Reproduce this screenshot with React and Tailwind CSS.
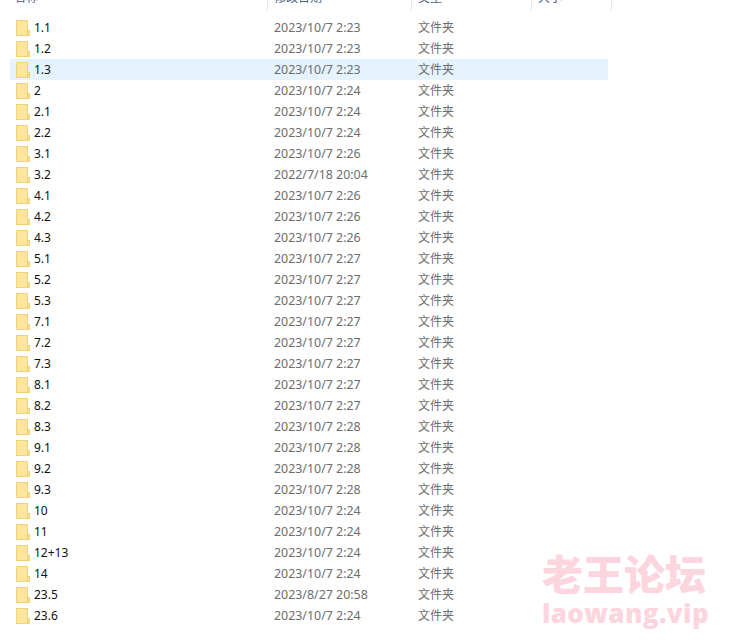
const rows = [
  ["1.1", "2023/10/7 2:23"], ["1.2", "2023/10/7 2:23"], ["1.3", "2023/10/7 2:23", true], ["2", "2023/10/7 2:24"],
  ["2.1", "2023/10/7 2:24"], ["2.2", "2023/10/7 2:24"], ["3.1", "2023/10/7 2:26"], ["3.2", "2022/7/18 20:04"],
  ["4.1", "2023/10/7 2:26"], ["4.2", "2023/10/7 2:26"], ["4.3", "2023/10/7 2:26"], ["5.1", "2023/10/7 2:27"],
  ["5.2", "2023/10/7 2:27"], ["5.3", "2023/10/7 2:27"], ["7.1", "2023/10/7 2:27"], ["7.2", "2023/10/7 2:27"],
  ["7.3", "2023/10/7 2:27"], ["8.1", "2023/10/7 2:27"], ["8.2", "2023/10/7 2:27"], ["8.3", "2023/10/7 2:28"],
  ["9.1", "2023/10/7 2:28"], ["9.2", "2023/10/7 2:28"], ["9.3", "2023/10/7 2:28"], ["10", "2023/10/7 2:24"],
  ["11", "2023/10/7 2:24"], ["12+13", "2023/10/7 2:24"], ["14", "2023/10/7 2:24"], ["23.5", "2023/8/27 20:58"],
  ["23.6", "2023/10/7 2:24"],
];

function Folder() {
  return (
    <svg width="14" height="16" viewBox="0 0 14 16" className="shrink-0">
      <rect x="0.5" y="0.5" width="11" height="15" fill="#ffe49c" stroke="#efd27c" />
      <rect x="11.5" y="10.5" width="2" height="5" fill="#f9dc8c" stroke="#efd27c" />
    </svg>
  );
}

export default function App() {
  return (
    <div className="relative w-[729px] h-[640px] overflow-hidden bg-white font-['Noto_Sans','Noto_Sans_CJK_SC',sans-serif] text-xs">
      <div className="flex h-[11px] overflow-hidden text-[#4c607a] pl-[14px]">
        <div className="w-[253px] -mt-[11px] leading-[18px]">名称</div>
        <div className="w-[144px] -mt-[11px] leading-[18px] border-l border-[#e5e5e5] pl-[6px] h-[22px]">修改日期</div>
        <div className="w-[120px] -mt-[11px] leading-[18px] border-l border-[#e5e5e5] pl-[6px] h-[22px]">类型</div>
        <div className="w-[81px] -mt-[11px] leading-[18px] border-l border-r border-[#e5e5e5] pl-[6px] h-[22px]">大小</div>
      </div>
      <div className="mt-[6px] ml-[10px] w-[598px] flex flex-col">
        {rows.map(([name, date, selected]) => (
          <div key={name} className={`flex items-center h-[21px] ${selected ? "bg-[#e5f3ff]" : ""}`}>
            <div className="w-[257px] flex items-center gap-[4px] pl-[6px] text-[#111111]">
              <Folder />
              <span>{name}</span>
            </div>
            <div className="w-[144px] pl-[7px] pt-px text-[12.4px] leading-[16px] text-[#6d6d6d]">{date}</div>
            <div className="pl-[7px] text-[#6d6d6d]">文件夹</div>
          </div>
        ))}
      </div>
      <div className="absolute left-[540px] top-[553px] w-[168px] flex flex-col items-center text-[#fcd5df] font-black">
        <div className="text-[41px] leading-[42px]">老王论坛</div>
        <div className="text-[26px] leading-[30px] tracking-[0.4px] mt-[3px] pl-[3px] font-['Open_Sans',sans-serif]">laowang.vip</div>
      </div>
    </div>
  );
}
